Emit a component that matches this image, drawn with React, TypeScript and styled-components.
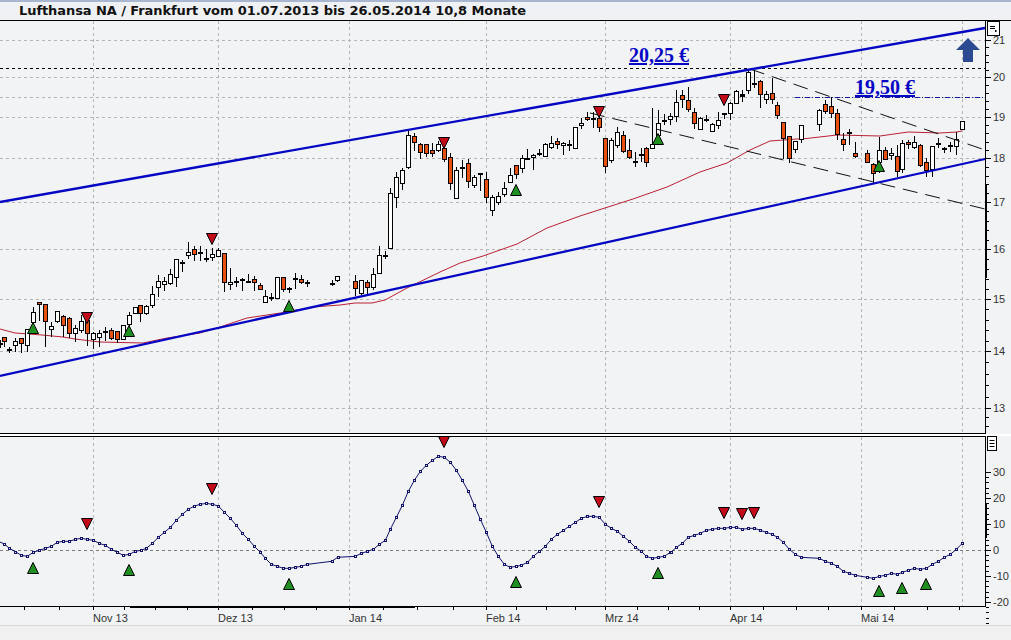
import { FC } from "react"
import styled, { createGlobalStyle } from "styled-components"

const GlobalStyle = createGlobalStyle`
  html, body {
    margin: 0;
    padding: 0;
    background: #f2f3f5;
  }
`

// read off the chart at 3x, so every row is [x, high, bodyTop, bodyBottom, low, down]
type Row = [number, number, number, number, number, number?]
type Candle = { x: number; high: number; top: number; bottom: number; low: number; down: boolean }

const read = (ox: number, oy: number, rows: Row[]): Candle[] =>
  rows.map(([x, high, top, bottom, low, down]) => ({
    x: Math.round(x / 3 + ox),
    high: Math.round(high / 3 + oy),
    top: Math.round(top / 3 + oy),
    bottom: Math.round(bottom / 3 + oy),
    low: Math.round(low / 3 + oy),
    down: !!down,
  }))

const candles: Candle[] = [
  ...read(0, 230, [
    [1, 330, 340, 342, 353],
    [13, 322, 322, 332, 350, 1],
    [28, 350, 358, 359, 368],
    [46, 325, 334, 344, 365],
    [64, 335, 325, 338, 368, 1],
    [82, 298, 298, 345, 365],
    [100, 232, 247, 275, 300],
    [118, 215, 217, 223, 272, 1],
    [136, 222, 222, 272, 350, 1],
    [154, 275, 287, 297, 322],
    [172, 243, 244, 274, 278],
    [190, 256, 257, 286, 320, 1],
    [208, 262, 263, 308, 325, 1],
    [226, 285, 295, 308, 335],
    [244, 255, 272, 300, 310],
    [262, 265, 270, 310, 348, 1],
    [280, 306, 308, 326, 358],
    [298, 300, 310, 320, 352],
    [316, 290, 304, 306, 332],
    [334, 295, 300, 323, 330, 1],
    [352, 304, 304, 328, 340, 1],
    [370, 285, 285, 326, 330],
    [388, 245, 255, 282, 300],
    [406, 232, 232, 248, 252],
    [421, 226, 226, 250, 275, 1],
    [439, 225, 229, 250, 255],
    [457, 168, 193, 224, 233],
    [475, 135, 154, 172, 200],
    [493, 140, 154, 163, 182],
    [511, 118, 133, 158, 165],
    [529, 87, 88, 142, 170],
    [547, 90, 96, 97, 125],
    [565, 37, 67, 76, 86],
    [583, 48, 58, 73, 92, 1],
    [601, 48, 67, 69, 92],
    [619, 58, 83, 85, 95],
    [637, 55, 73, 82, 92],
    [655, 55, 61, 77, 82],
    [673, 68, 70, 157, 185, 1],
    [691, 115, 157, 163, 180],
    [709, 140, 154, 156, 170],
    [727, 145, 146, 151, 182],
    [745, 132, 152, 155, 160],
    [763, 138, 148, 157, 183, 1],
    [781, 160, 166, 176, 180, 1],
    [796, 180, 199, 215, 218],
    [814, 188, 200, 202, 212],
    [830, 142, 142, 204, 208],
    [850, 141, 142, 176, 186, 1],
    [868, 170, 174, 177, 190],
    [886, 130, 145, 147, 178],
    [904, 135, 148, 155, 162, 1],
    [922, 150, 157, 158, 172],
    [995, 150, 159, 160, 168],
    [1012, 137, 137, 150, 155],
  ]),
  ...read(340, 120, [
    [46, 465, 482, 505, 528, 1],
    [64, 480, 481, 518, 525],
    [82, 480, 487, 502, 525, 1],
    [100, 445, 463, 500, 510],
    [118, 378, 406, 458, 460],
    [136, 392, 404, 405, 418],
    [151, 205, 220, 385, 388],
    [169, 155, 172, 232, 263],
    [187, 145, 151, 190, 210],
    [205, 34, 46, 140, 147],
    [223, 38, 49, 67, 92, 1],
    [241, 68, 73, 95, 116, 1],
    [259, 72, 73, 100, 110, 1],
    [277, 70, 91, 98, 112, 1],
    [295, 62, 73, 89, 95],
    [313, 72, 85, 116, 125, 1],
    [331, 100, 112, 190, 210, 1],
    [349, 140, 151, 233, 238],
    [367, 120, 142, 143, 175],
    [385, 118, 130, 182, 203, 1],
    [403, 165, 172, 196, 204],
    [421, 158, 160, 162, 212],
    [439, 155, 178, 232, 250, 1],
    [457, 225, 232, 271, 288],
    [475, 215, 227, 245, 255],
    [493, 187, 205, 223, 230],
    [511, 145, 166, 187, 190],
    [529, 135, 136, 161, 177, 1],
    [547, 105, 115, 145, 158],
    [562, 88, 114, 116, 120],
    [580, 103, 106, 112, 150],
    [598, 88, 99, 100, 108],
    [616, 70, 73, 107, 110],
    [634, 48, 70, 80, 88],
    [652, 55, 64, 73, 88, 1],
    [670, 65, 68, 76, 104],
    [688, 60, 72, 73, 92],
  ]),
  ...read(570, 80, [
    [16, 140, 142, 203, 205],
    [34, 113, 130, 136, 146],
    [52, 95, 112, 118, 122, 1],
    [70, 95, 115, 116, 145],
    [88, 108, 115, 140, 155, 1],
    [106, 175, 175, 258, 280, 1],
    [124, 175, 179, 241, 249],
    [142, 142, 155, 194, 205],
    [160, 154, 164, 212, 218, 1],
    [178, 178, 209, 230, 238, 1],
    [196, 215, 242, 244, 262],
    [214, 205, 221, 222, 245],
    [229, 200, 203, 247, 262, 1],
    [247, 85, 193, 203, 205],
    [265, 90, 130, 165, 190],
    [283, 102, 121, 122, 136],
    [301, 98, 109, 118, 135],
    [319, 30, 67, 109, 127],
    [337, 30, 46, 58, 85, 1],
    [355, 22, 61, 88, 97, 1],
    [373, 85, 97, 130, 148, 1],
    [391, 112, 115, 146, 150],
    [409, 105, 116, 118, 125],
    [427, 130, 133, 152, 155],
    [445, 95, 121, 134, 148],
    [463, 98, 99, 100, 118],
    [481, 65, 70, 100, 120],
    [499, 30, 34, 68, 70],
    [517, 32, 43, 45, 62],
  ]),
  ...read(725, 60, [
    [16, 128, 130, 160, 180],
    [34, 90, 93, 128, 130],
    [52, 90, 104, 105, 125],
    [70, 28, 36, 90, 102],
    [88, 30, 68, 70, 85],
    [106, 60, 63, 103, 143, 1],
    [124, 92, 102, 118, 132],
    [142, 55, 100, 118, 132, 1],
    [157, 125, 135, 165, 178, 1],
  ]),
  ...read(780, 90, [
    [10, 95, 97, 143, 208, 1],
    [28, 138, 138, 204, 220, 1],
    [46, 152, 154, 178, 188],
    [64, 105, 106, 146, 160],
    [118, 58, 59, 103, 122],
    [136, 30, 41, 62, 73, 1],
    [154, 22, 48, 68, 85, 1],
    [172, 58, 70, 132, 150, 1],
    [190, 130, 148, 163, 182, 1],
    [208, 118, 126, 128, 165],
    [226, 155, 190, 199, 205, 1],
    [262, 180, 188, 216, 220, 1],
    [280, 220, 223, 250, 280, 1],
    [298, 142, 181, 215, 250],
    [316, 172, 181, 206, 210, 1],
    [334, 175, 190, 196, 210],
    [352, 165, 198, 242, 262, 1],
    [367, 150, 158, 238, 250],
    [385, 150, 155, 163, 178, 1],
    [403, 138, 157, 170, 178],
    [421, 163, 164, 224, 230, 1],
    [439, 205, 217, 240, 260, 1],
    [457, 168, 169, 236, 260],
    [475, 145, 158, 160, 175],
    [493, 170, 174, 175, 190],
    [511, 155, 166, 167, 185],
    [529, 125, 146, 169, 195],
    [547, 92, 92, 116, 118],
  ]),
]

const movingAverage =
  "0,329 15,333 42,335 63,337 75,339 100,342 143,343 167,338 200,333 217,328 247,318 287,312 313,307 340,305 355,303 372,303 385,300 407,288 440,272 460,263 483,256 517,244 547,228 580,216 633,199 667,187 700,172 727,163 750,150 770,141 797,139 802,139 837,135 880,136 908,132 940,133 957,132 962,131"

const osc = (ox: number, pts: number[][]) => pts.map(([x, y]) => [x / 3 + ox, y / 3 + 425])

const oscPoints = [
  ...osc(0, [
    [-6, 349], [12, 356], [28, 370], [46, 380], [64, 391], [82, 394], [100, 382], [118, 376], [136, 370], [154, 364],
    [172, 352], [190, 349], [208, 349], [226, 343], [244, 340], [262, 343], [280, 346], [298, 355], [316, 361],
    [334, 373], [352, 382], [370, 391], [388, 388], [406, 379], [422, 376], [439, 370], [457, 355], [475, 337],
    [493, 322], [511, 307], [529, 286], [547, 268], [565, 253], [583, 243], [601, 238], [619, 235], [637, 238],
    [655, 243], [673, 262], [691, 280], [709, 301], [727, 325], [745, 343], [763, 364], [781, 382], [796, 400],
    [814, 418], [832, 424], [850, 430], [868, 430], [886, 427], [904, 424], [922, 418], [995, 409], [1013, 397],
  ]),
  ...osc(340, [
    [46, 394], [64, 385], [82, 379], [100, 373], [118, 358], [136, 346], [151, 313], [169, 277], [187, 241],
    [205, 199], [223, 166], [241, 139], [259, 121], [277, 106], [295, 94], [313, 97], [331, 112], [349, 136],
    [367, 166], [385, 199], [403, 241], [421, 283], [439, 322], [457, 364], [475, 394], [493, 418], [511, 427],
    [529, 424], [544, 421], [562, 412], [580, 394], [598, 379], [616, 364], [634, 343], [652, 328], [670, 316],
    [688, 304], [706, 292], [724, 280], [742, 274], [760, 274], [778, 277], [796, 298], [814, 310], [832, 319],
    [850, 334], [868, 349], [886, 367], [904, 379], [919, 394], [937, 400], [955, 397], [973, 394], [991, 382],
  ]),
  ...osc(671, [
    [0, 382], [16, 367], [34, 355], [52, 337], [70, 331], [88, 325], [106, 316], [124, 313], [142, 310], [160, 310],
    [178, 307], [196, 307], [214, 313], [232, 310], [250, 310], [268, 316], [286, 322], [304, 328], [319, 337],
    [337, 352], [355, 373], [373, 388], [391, 397], [445, 400], [463, 409], [481, 415], [499, 424], [517, 439],
    [535, 445], [553, 451], [589, 457], [607, 460], [625, 454], [643, 451], [661, 445], [679, 448], [694, 442],
    [712, 436], [730, 430], [748, 433], [766, 430], [784, 418], [802, 409], [820, 397], [838, 388], [856, 373],
    [874, 355],
  ]),
]

const gridX = [93.5, 218.5, 349.5, 486.5, 605.5, 730.5, 861.5, 962.5]
const gridY = [40.5, 77.5, 97.5, 117.5, 158.5, 202.5, 249.5, 299.5, 351.5, 408.5]
const priceLabels: [string, number][] = [
  ["21", 40], ["20", 77], ["19", 117], ["18", 158], ["17", 202], ["16", 249], ["15", 299], ["14", 351], ["13", 408],
]
const oscLabels: [string, number][] = [
  ["30", 472], ["20", 498], ["10", 524], ["0", 550], ["-10", 576], ["-20", 602],
]
const dateLabels: [string, number][] = [
  ["Nov 13", 93], ["Dez 13", 218], ["Jan 14", 349], ["Feb 14", 486], ["Mrz 14", 605], ["Apr 14", 730], ["Mai 14", 861],
]
const dateTicks = [
  24, 59, 93, 124, 155, 187, 218, 252, 284, 316, 349, 383, 417, 453, 486, 516, 546, 575, 605, 637, 668, 699, 730, 763,
  796, 828, 861, 894, 927, 959,
]

const priceTicks = priceLabels.flatMap(([, y], i) => {
  const next = priceLabels[i + 1]?.[1] ?? y + 45
  return [1, 2, 3, 4].map((k) => Math.round(y + ((next - y) * k) / 5))
})

type Marker = [number, number]
const priceUp: Marker[] = [[33, 328], [129, 331], [289, 306], [516, 190], [658, 139], [879, 166]]
const priceDown: Marker[] = [[87, 318], [212, 239], [444, 143], [599, 112], [724, 100]]
const oscUp: Marker[] = [[33, 568], [129, 570], [289, 584], [516, 582], [658, 573], [879, 591], [902, 588], [926, 584]]
const oscDown: Marker[] = [[87, 524], [212, 489], [444, 442], [599, 502], [724, 513], [742, 514], [754, 513]]

const Page = styled.div`
  display: flex;
  flex-direction: column;
  width: 1011px;
  height: 640px;
  overflow: hidden;
  background: #f2f3f5;
`
const TitleBar = styled.div`
  box-sizing: border-box;
  height: 21px;
  padding-left: 19px;
  border-top: 2px solid #a9b6cf;
  border-bottom: 1px solid #000;
  background: #eff1f4;
  color: #111;
  font: bold 13px/17px "DejaVu Sans", Verdana, sans-serif;
  letter-spacing: -0.08px;
  white-space: nowrap;
`
const ChartRow = styled.div<{ $height: number }>`
  position: relative;
  height: ${({ $height }) => $height}px;
`
const PanelGap = styled.div`
  height: 2px;
  background: #fff;
`
const ChartSvg = styled.svg`
  display: block;
  width: 1011px;
  height: 100%;
  shape-rendering: crispEdges;
`
const Curves = styled.g`
  shape-rendering: geometricPrecision;
`
const Footer = styled.div`
  flex: 1;
  border-top: 1px solid #d9d9d9;
  background: #f0f0f0;
`
const MenuButton = styled.div<{ $wide?: boolean }>`
  position: absolute;
  top: 0;
  left: 987px;
  box-sizing: border-box;
  display: flex;
  align-items: center;
  justify-content: center;
  width: ${({ $wide }) => ($wide ? 13 : 10)}px;
  height: 15px;
  border: 1px solid #000;
  background: #fff;
`
const GridLine = styled.line<{ $dark?: boolean }>`
  stroke: ${({ $dark }) => ($dark ? "#7a7a7a" : "#b5b5b5")};
  stroke-dasharray: 3 3;
`
const BlackLine = styled.line<{ $heavy?: boolean }>`
  stroke: #000;
  stroke-width: ${({ $heavy }) => ($heavy ? 2 : 1)}px;
`
const Wick = styled.line`
  stroke: #000;
`
const Body = styled.rect<{ $down: boolean }>`
  fill: ${({ $down }) => ($down ? "#e8500f" : "#fff")};
  stroke: #000;
`
const TrendLine = styled.line`
  stroke: #0505c4;
  stroke-width: 2.3px;
`
const ChannelLine = styled.line`
  stroke: #111;
  stroke-dasharray: 15 8;
`
const ShortDash = styled.line`
  stroke: #000;
  stroke-dasharray: 3 3;
`
const TargetDash = styled.line`
  stroke: #1414a0;
  stroke-dasharray: 5 2 1 2;
`
const MaLine = styled.polyline`
  fill: none;
  stroke: #bb2035;
`
const OscLine = styled.polyline`
  fill: none;
  stroke: #12126e;
`
const OscDot = styled.rect`
  fill: #dfe2f0;
  stroke: #12126e;
`
const Triangle = styled.polygon<{ $down?: boolean }>`
  fill: ${({ $down }) => ($down ? "#c20a18" : "#1f8f1f")};
  stroke: #000;
  shape-rendering: geometricPrecision;
`
const PriceTag = styled.text`
  fill: #0505c4;
  font: bold 20px "Liberation Serif", "Times New Roman", serif;
  text-decoration: underline;
`
const AxisLabel = styled.text`
  fill: #333;
  font: 11px "Liberation Sans", Arial, sans-serif;
`

const Triangles: FC<{ items: Marker[]; down?: boolean }> = ({ items, down }) => (
  <>
    {items.map(([x, y]) => (
      <Triangle
        key={x}
        $down={down}
        points={
          down
            ? `${x - 5.5},${y - 5.5} ${x + 5.5},${y - 5.5} ${x},${y + 5.5}`
            : `${x - 5.5},${y + 5.5} ${x + 5.5},${y + 5.5} ${x},${y - 5.5}`
        }
      />
    ))}
  </>
)

const CandleMark: FC<{ candle: Candle }> = ({ candle: { x, high, top, bottom, low, down } }) => {
  const cross = bottom - top <= 1
  return (
    <>
      <Wick x1={x + 0.5} x2={x + 0.5} y1={high} y2={low} />
      {cross ? (
        <BlackLine $heavy x1={x - 2} x2={x + 3} y1={top + 1} y2={top + 1} />
      ) : (
        <Body $down={down} x={x - 1.5} y={top + 0.5} width={4} height={bottom - top} />
      )}
    </>
  )
}

const PriceChart: FC = () => (
  <ChartSvg viewBox="0 0 1011 413">
    <g transform="translate(0 -21)">
      {gridY.map((y) => (
        <GridLine key={y} x1={0} x2={985} y1={y} y2={y} />
      ))}
      {gridX.map((x) => (
        <GridLine key={x} x1={x} x2={x} y1={21} y2={433} />
      ))}
      <ShortDash x1={0} x2={985} y1={68.5} y2={68.5} />
      <TargetDash x1={795} x2={985} y1={97.5} y2={97.5} />
      <Curves>
        <MaLine points={movingAverage} />
      </Curves>
      {candles.map((c, i) => (
        <CandleMark key={i} candle={c} />
      ))}
      <Curves>
        <ChannelLine x1={750} y1={69} x2={985} y2={150} />
        <ChannelLine x1={590} y1={113} x2={985} y2={209} />
        <TrendLine x1={0} y1={202} x2={985} y2={28} />
        <TrendLine x1={0} y1={376} x2={985} y2={159} />
      </Curves>
      <Triangles items={priceUp} />
      <Triangles items={priceDown} down />
      <PriceTag x={629} y={62}>20,25 €</PriceTag>
      <PriceTag x={855} y={94}>19,50 €</PriceTag>
      <polygon points="968,38 980,50 973,50 973,62 963,62 963,50 956,50" fill="#2b4a92" shapeRendering="geometricPrecision" />
      <BlackLine x1={985.5} x2={985.5} y1={21} y2={434} />
      <BlackLine $heavy x1={986} x2={986} y1={184} y2={278} />
      <BlackLine x1={0} x2={986} y1={433.5} y2={433.5} />
      {priceLabels.map(([label, y]) => (
        <g key={label}>
          <BlackLine x1={986} x2={991} y1={y + 0.5} y2={y + 0.5} />
          <AxisLabel x={993} y={y + 4}>{label}</AxisLabel>
        </g>
      ))}
      {priceTicks.map((y) => (
        <BlackLine key={y} x1={986} x2={989} y1={y + 0.5} y2={y + 0.5} />
      ))}
    </g>
  </ChartSvg>
)

const OscChart: FC = () => (
  <ChartSvg viewBox="0 0 1011 189">
    <g transform="translate(0 -436)">
      {gridX.map((x) => (
        <GridLine key={x} x1={x} x2={x} y1={437} y2={606} />
      ))}
      <GridLine $dark x1={0} x2={985} y1={550.5} y2={550.5} />
      <Curves>
        <OscLine points={oscPoints.map(([x, y]) => `${x},${y}`).join(" ")} />
      </Curves>
      {oscPoints.map(([x, y]) => (
        <OscDot key={x} x={Math.round(x) - 0.5} y={Math.round(y) - 0.5} width={2} height={2} />
      ))}
      <Triangles items={oscUp} />
      <Triangles items={oscDown} down />
      <BlackLine x1={0} x2={986} y1={436.5} y2={436.5} />
      <BlackLine x1={985.5} x2={985.5} y1={436} y2={607} />
      <BlackLine $heavy x1={986} x2={986} y1={503} y2={538} />
      <BlackLine x1={0} x2={986} y1={606.5} y2={606.5} />
      <BlackLine $heavy x1={130} x2={415} y1={607} y2={607} />
      {oscLabels.map(([label, y]) => (
        <g key={label}>
          <BlackLine x1={986} x2={991} y1={y + 0.5} y2={y + 0.5} />
          <AxisLabel x={993} y={y + 4}>{label}</AxisLabel>
          {[1, 2, 3, 4].map((k) => (
            <BlackLine key={k} x1={986} x2={989} y1={y + 0.5 + (k * 26) / 5} y2={y + 0.5 + (k * 26) / 5} />
          ))}
        </g>
      ))}
      {dateTicks.map((x) => (
        <BlackLine key={x} x1={x + 0.5} x2={x + 0.5} y1={607} y2={610} />
      ))}
      {dateLabels.map(([label, x]) => (
        <AxisLabel key={label} x={x} y={622}>{label}</AxisLabel>
      ))}
    </g>
  </ChartSvg>
)

const App: FC = () => (
  <>
    <GlobalStyle />
    <Page>
      <TitleBar>Lufthansa NA / Frankfurt vom 01.07.2013 bis 26.05.2014 10,8 Monate</TitleBar>
      <ChartRow $height={413}>
        <PriceChart />
        <MenuButton $wide>
          <svg width="9" height="8" viewBox="0 0 9 8">
            <path d="M1 1.5h5M1 3.5h5" stroke="#000" fill="none" />
            <rect x="6" y="5" width="1.5" height="2" fill="#000" />
          </svg>
        </MenuButton>
      </ChartRow>
      <PanelGap />
      <ChartRow $height={189}>
        <OscChart />
        <MenuButton>
          <svg width="6" height="7" viewBox="0 0 6 7">
            <path d="M0.5 0.5h5M0.5 3.5h5M0.5 6.5h5" stroke="#000" fill="none" />
          </svg>
        </MenuButton>
      </ChartRow>
      <Footer />
    </Page>
  </>
)
export default App
